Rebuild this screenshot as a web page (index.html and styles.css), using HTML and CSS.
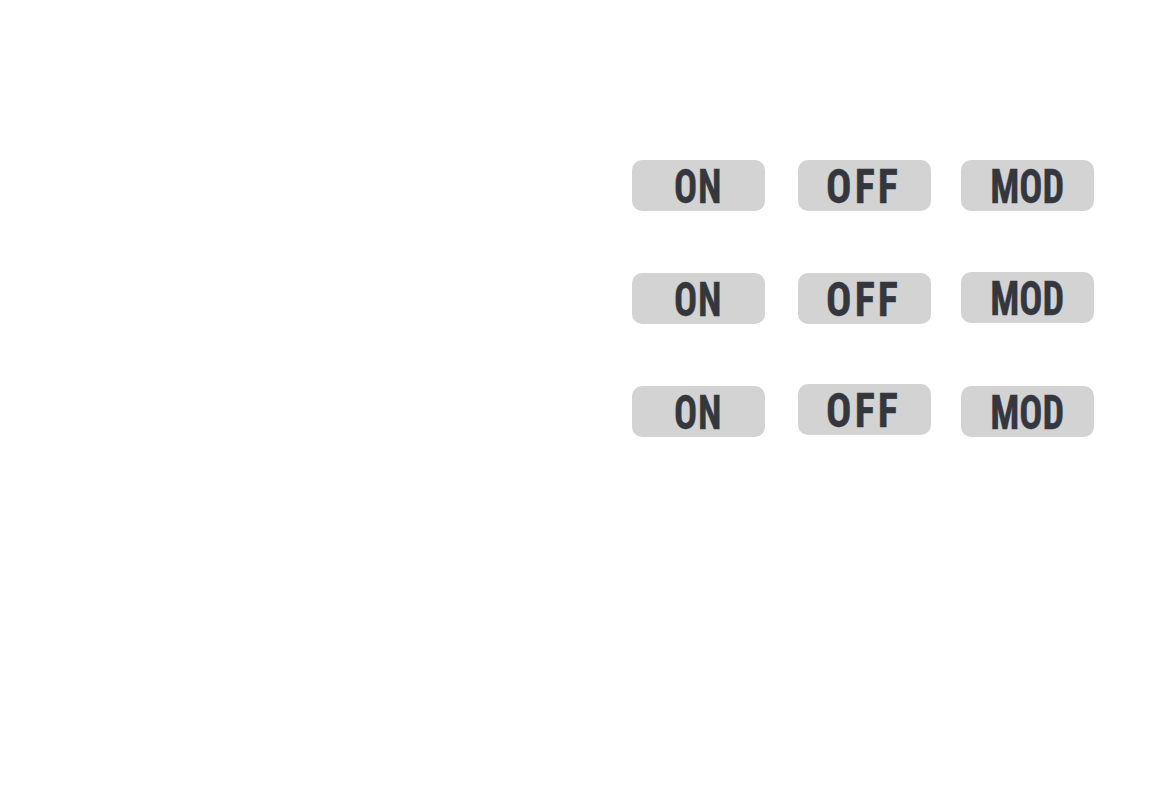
FILE: index.html
```html
<!DOCTYPE html>
<html>
<head>
<meta charset="utf-8">
<title>Modes</title>
<link rel="stylesheet" href="styles.css">
</head>
<body>
<div class="grid">
  <button class="pill pill-on"><span class="label">ON</span></button>
  <button class="pill pill-off"><span class="label">OFF</span></button>
  <button class="pill pill-mod"><span class="label">MOD</span></button>
  <button class="pill pill-on"><span class="label">ON</span></button>
  <button class="pill pill-off"><span class="label">OFF</span></button>
  <button class="pill pill-mod up1"><span class="label">MOD</span></button>
  <button class="pill pill-on"><span class="label">ON</span></button>
  <button class="pill pill-off up2"><span class="label">OFF</span></button>
  <button class="pill pill-mod"><span class="label">MOD</span></button>
</div>
</body>
</html>
```
FILE: styles.css
```css
html, body {
  margin: 0;
  background: #ffffff;
}
body {
  padding: 160px 0 0 632px;
}
.grid {
  display: grid;
  grid-template-columns: 166px 163px 133px;
  grid-auto-rows: 51px;
  row-gap: 62px;
  align-items: start;
}
.pill {
  box-sizing: border-box;
  width: 133px;
  height: 51px;
  margin: 0;
  padding: 2px 1px 0 0;
  border: none;
  border-radius: 10px;
  background: #d3d3d3;
  color: #34373e;
  display: flex;
  align-items: center;
  justify-content: center;
  font-family: Roboto, sans-serif;
  font-stretch: condensed;
  font-weight: 700;
  font-size: 48px;
}
.label {
  display: inline-block;
  line-height: 48px;
  transform: scaleX(.8);
  white-space: nowrap;
  -webkit-text-stroke: 0.4px currentColor;
}
.pill-on .label { letter-spacing: 1px; margin-right: -1px; }
.pill-off .label { letter-spacing: 3.5px; margin-right: 0; transform: scaleX(.88); }
.pill-mod .label { letter-spacing: 0; }
.up1 { margin-top: -1px; }
.up2 { margin-top: -2px; }
```
